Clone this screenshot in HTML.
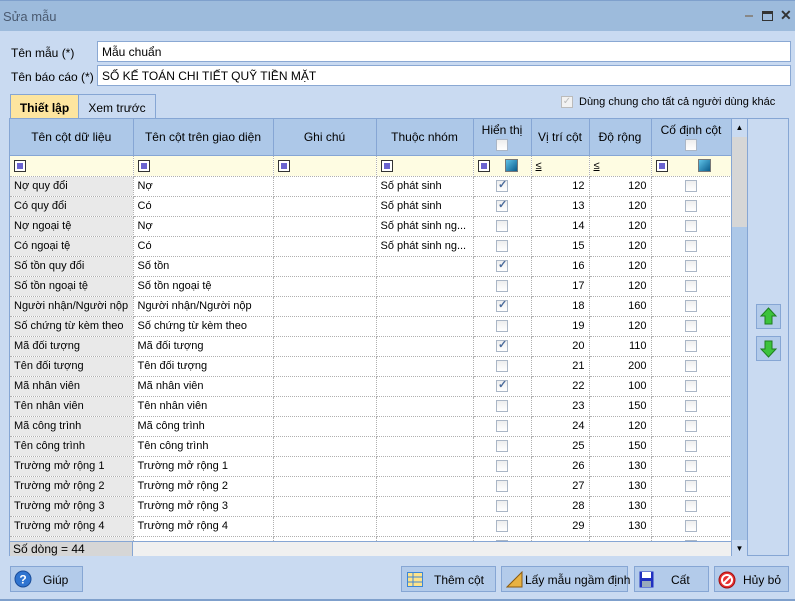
<!DOCTYPE html>
<html><head><meta charset="utf-8"><style>
*{box-sizing:border-box;margin:0;padding:0}
body{width:795px;height:601px;overflow:hidden;background:#c9daf1;font-family:"Liberation Sans",sans-serif;font-size:11px;color:#000;position:relative}
.a{position:absolute}
.title{left:0;top:0;width:795px;height:31px;background:#9dbbdc;border-top:1px solid #7fa0cc}
.inp{background:#fff;border:1px solid #8aa8d3;height:21px;padding:3px 4px;font-size:12px}
.grid{left:10px;top:119px;width:721px;height:422px;overflow:hidden;background:#fff}
table{border-collapse:collapse;table-layout:fixed;width:721px}
td{height:20px;border-right:1px dotted #b0b0b0;border-bottom:1px dotted #b0b0b0;padding:0 4px;white-space:nowrap;overflow:hidden}
td.c0{background:#e9e9e9}
tr.h td{height:36px;background:#adc8e8;border-right:1px solid #86a6d4;border-bottom:1px solid #86a6d4;text-align:center;vertical-align:middle;font-size:12px}
tr.f td{background:#fefce2;height:21px}
.r{text-align:right}.c{text-align:center}
.cb{display:inline-block;width:12px;height:12px;border:1px solid #aab6c6;background:linear-gradient(#eee,#fff);vertical-align:middle;position:relative}
.cb.k::after{content:"✓";position:absolute;left:1px;top:-3px;font-size:11px;color:#4a6a9a;font-weight:bold}
.fb{display:inline-block;width:12px;height:12px;border:1px solid #333;background:#fff;vertical-align:middle;position:relative}
.fb::after{content:"";position:absolute;left:2px;top:2px;width:6px;height:6px;background:#6a63d0}
.fb2{display:inline-block;width:13px;height:13px;border:1px solid #777;background:linear-gradient(135deg,#5fc2e8,#0a5c8c);vertical-align:middle}
.btn{height:26px;top:566px;background:#b3cbea;border:1px solid #86a6d4;font-size:12px;display:flex;align-items:center}
</style></head><body>
<div class="a title"><span class="a" style="left:3px;top:8px;font-size:13px;color:#4a5a70">Sửa mẫu</span>
<div class="a" style="left:745px;top:14px;width:8px;height:2px;background:#888"></div>
<div class="a" style="left:762px;top:10px;width:11px;height:10px;border:1px solid #333;border-top-width:3px"></div>
<span class="a" style="left:780px;top:6px;font-size:14px;font-weight:bold;color:#333">✕</span></div>
<span class="a" style="left:11px;top:46px;font-size:12px">Tên mẫu (*)</span>
<span class="a" style="left:11px;top:70px;font-size:12px">Tên báo cáo (*)</span>
<div class="a inp" style="left:97px;top:41px;width:694px">Mẫu chuẩn</div>
<div class="a inp" style="left:97px;top:65px;width:694px">SỐ KẾ TOÁN CHI TIẾT QUỸ TIỀN MẶT</div>
<div class="a" style="left:10px;top:94px;width:69px;height:26px;background:#fde59f;border:1px solid #86a6d4;border-bottom:none;font-weight:bold;font-size:12px;text-align:center;padding-top:6px">Thiết lập</div>
<div class="a" style="left:78px;top:94px;width:78px;height:25px;background:#c9daf1;border:1px solid #86a6d4;border-bottom:none;text-align:center;padding-top:6px;font-size:12px">Xem trước</div>
<div class="a" style="left:561px;top:96px;width:12px;height:12px;border:1px solid #bbb;background:#f2f2f2;color:#bbb;font-size:10px;line-height:10px;text-align:center">✓</div>
<span class="a" style="left:579px;top:96px">Dùng chung cho tất cả người dùng khác</span>
<div class="a" style="left:9px;top:118px;width:780px;height:438px;border:1px solid #86a6d4"></div>
<div class="a grid"><table>
<colgroup><col style="width:123px"><col style="width:140px"><col style="width:103px"><col style="width:97px"><col style="width:58px"><col style="width:58px"><col style="width:62px"><col style="width:80px"></colgroup>
<tr class="h"><td>Tên cột dữ liệu</td><td>Tên cột trên giao diện</td><td>Ghi chú</td><td>Thuộc nhóm</td><td>Hiển thị<br><span class="cb"></span></td><td>Vị trí cột</td><td>Độ rộng</td><td>Cố định cột<br><span class="cb"></span></td></tr>
<tr class="f"><td class="c0"><span class="fb"></span></td><td><span class="fb"></span></td><td><span class="fb"></span></td><td><span class="fb"></span></td><td><span class="fb"></span>&nbsp;&nbsp;&nbsp;&nbsp;&nbsp;<span class="fb2"></span></td><td><u>≤</u></td><td><u>≤</u></td><td><span class="fb"></span>&nbsp;&nbsp;&nbsp;&nbsp;&nbsp;&nbsp;&nbsp;&nbsp;&nbsp;&nbsp;<span class="fb2"></span></td></tr>
<tr><td class="c0">Nợ quy đổi</td><td>Nợ</td><td></td><td>Số phát sinh</td><td class="c"><span class="cb k"></span></td><td class="r">12</td><td class="r">120</td><td class="c"><span class="cb"></span></td></tr>
<tr><td class="c0">Có quy đổi</td><td>Có</td><td></td><td>Số phát sinh</td><td class="c"><span class="cb k"></span></td><td class="r">13</td><td class="r">120</td><td class="c"><span class="cb"></span></td></tr>
<tr><td class="c0">Nợ ngoại tệ</td><td>Nợ</td><td></td><td>Số phát sinh ng...</td><td class="c"><span class="cb"></span></td><td class="r">14</td><td class="r">120</td><td class="c"><span class="cb"></span></td></tr>
<tr><td class="c0">Có ngoại tệ</td><td>Có</td><td></td><td>Số phát sinh ng...</td><td class="c"><span class="cb"></span></td><td class="r">15</td><td class="r">120</td><td class="c"><span class="cb"></span></td></tr>
<tr><td class="c0">Số tồn quy đổi</td><td>Số tồn</td><td></td><td></td><td class="c"><span class="cb k"></span></td><td class="r">16</td><td class="r">120</td><td class="c"><span class="cb"></span></td></tr>
<tr><td class="c0">Số tồn ngoại tệ</td><td>Số tồn ngoại tệ</td><td></td><td></td><td class="c"><span class="cb"></span></td><td class="r">17</td><td class="r">120</td><td class="c"><span class="cb"></span></td></tr>
<tr><td class="c0">Người nhận/Người nộp</td><td>Người nhận/Người nộp</td><td></td><td></td><td class="c"><span class="cb k"></span></td><td class="r">18</td><td class="r">160</td><td class="c"><span class="cb"></span></td></tr>
<tr><td class="c0">Số chứng từ kèm theo</td><td>Số chứng từ kèm theo</td><td></td><td></td><td class="c"><span class="cb"></span></td><td class="r">19</td><td class="r">120</td><td class="c"><span class="cb"></span></td></tr>
<tr><td class="c0">Mã đối tượng</td><td>Mã đối tượng</td><td></td><td></td><td class="c"><span class="cb k"></span></td><td class="r">20</td><td class="r">110</td><td class="c"><span class="cb"></span></td></tr>
<tr><td class="c0">Tên đối tượng</td><td>Tên đối tượng</td><td></td><td></td><td class="c"><span class="cb"></span></td><td class="r">21</td><td class="r">200</td><td class="c"><span class="cb"></span></td></tr>
<tr><td class="c0">Mã nhân viên</td><td>Mã nhân viên</td><td></td><td></td><td class="c"><span class="cb k"></span></td><td class="r">22</td><td class="r">100</td><td class="c"><span class="cb"></span></td></tr>
<tr><td class="c0">Tên nhân viên</td><td>Tên nhân viên</td><td></td><td></td><td class="c"><span class="cb"></span></td><td class="r">23</td><td class="r">150</td><td class="c"><span class="cb"></span></td></tr>
<tr><td class="c0">Mã công trình</td><td>Mã công trình</td><td></td><td></td><td class="c"><span class="cb"></span></td><td class="r">24</td><td class="r">120</td><td class="c"><span class="cb"></span></td></tr>
<tr><td class="c0">Tên công trình</td><td>Tên công trình</td><td></td><td></td><td class="c"><span class="cb"></span></td><td class="r">25</td><td class="r">150</td><td class="c"><span class="cb"></span></td></tr>
<tr><td class="c0">Trường mở rộng 1</td><td>Trường mở rộng 1</td><td></td><td></td><td class="c"><span class="cb"></span></td><td class="r">26</td><td class="r">130</td><td class="c"><span class="cb"></span></td></tr>
<tr><td class="c0">Trường mở rộng 2</td><td>Trường mở rộng 2</td><td></td><td></td><td class="c"><span class="cb"></span></td><td class="r">27</td><td class="r">130</td><td class="c"><span class="cb"></span></td></tr>
<tr><td class="c0">Trường mở rộng 3</td><td>Trường mở rộng 3</td><td></td><td></td><td class="c"><span class="cb"></span></td><td class="r">28</td><td class="r">130</td><td class="c"><span class="cb"></span></td></tr>
<tr><td class="c0">Trường mở rộng 4</td><td>Trường mở rộng 4</td><td></td><td></td><td class="c"><span class="cb"></span></td><td class="r">29</td><td class="r">130</td><td class="c"><span class="cb"></span></td></tr>
<tr><td class="c0"></td><td></td><td></td><td></td><td class="c"><span class="cb"></span></td><td></td><td></td><td class="c"><span class="cb"></span></td></tr>
</table></div>
<div class="a" style="left:10px;top:541px;width:721px;height:15px;background:#f0f0f0;border-top:1px solid #86a6d4"><div class="a" style="left:0;top:0;width:123px;height:14px;background:#d6d6d6;border-right:1px solid #86a6d4;padding-left:3px;line-height:14px;font-size:12px">Số dòng = 44</div></div>
<div class="a" style="left:731px;top:119px;width:16px;height:437px;background:#adc8e8;border-left:1px solid #86a6d4">
<div class="a" style="left:0;top:0;width:15px;height:18px;background:#c9daf1;font-size:8px;text-align:center;padding-top:4px">▲</div>
<div class="a" style="left:0;top:18px;width:15px;height:90px;background:#d6d6d6"></div>
<div class="a" style="left:0;top:421px;width:15px;height:16px;background:#c9daf1;font-size:8px;text-align:center;padding-top:4px">▼</div></div>
<div class="a" style="left:747px;top:119px;width:1px;height:437px;background:#86a6d4"></div>
<div class="a" style="left:756px;top:304px;width:25px;height:25px;background:#b3cbea;border:1px solid #86a6d4"><svg width="23" height="23" viewBox="0 0 23 23"><path d="M11.5 3 L19 11 H15 V19 H8 V11 H4 Z" fill="#3cc33c" stroke="#1e7d1e"/></svg></div>
<div class="a" style="left:756px;top:336px;width:25px;height:25px;background:#b3cbea;border:1px solid #86a6d4"><svg width="23" height="23" viewBox="0 0 23 23"><path d="M11.5 20 L19 12 H15 V4 H8 V12 H4 Z" fill="#3cc33c" stroke="#1e7d1e"/></svg></div>
<div class="a btn" style="left:10px;width:73px"><svg class="a" style="left:3px;top:3px" width="18" height="18"><circle cx="9" cy="9" r="8" fill="#2f74d0" stroke="#1a4c99"/><text x="9" y="13.5" font-size="12" font-weight="bold" fill="#fff" text-anchor="middle" font-family="Liberation Sans">?</text></svg><span class="a" style="left:32px;top:6px">Giúp</span></div>
<div class="a btn" style="left:401px;width:95px"><svg class="a" style="left:5px;top:5px" width="16" height="15"><rect x="0.5" y="0.5" width="15" height="14" fill="#fde38a" stroke="#3d86d6"/><path d="M1 5H15M1 10H15M6 1V14" stroke="#3d86d6"/></svg><span class="a" style="left:32px;top:6px">Thêm cột</span></div>
<div class="a btn" style="left:501px;width:127px"><svg class="a" style="left:4px;top:4px" width="18" height="17"><path d="M1 16 L16 1 V16 Z" fill="#e8b243" stroke="#8a5a10"/></svg><span class="a" style="left:23px;top:6px;white-space:nowrap">Lấy mẫu ngầm định</span></div>
<div class="a btn" style="left:634px;width:75px"><svg class="a" style="left:4px;top:4px" width="15" height="17"><rect x="0.5" y="0.5" width="14" height="16" fill="#2030c0"/><rect x="3" y="1" width="9" height="6" fill="#fff"/><rect x="3" y="10" width="9" height="6" fill="#9ab"/></svg><span class="a" style="left:36px;top:6px">Cất</span></div>
<div class="a btn" style="left:714px;width:75px"><svg class="a" style="left:3px;top:4px" width="18" height="18"><circle cx="9" cy="9" r="8" fill="#e83030" stroke="#a01010"/><circle cx="9" cy="9" r="5" fill="none" stroke="#fff" stroke-width="2"/><path d="M5.5 12.5 L12.5 5.5" stroke="#fff" stroke-width="2"/></svg><span class="a" style="left:28px;top:6px">Hủy bỏ</span></div>
<div class="a" style="left:0;top:599px;width:795px;height:2px;background:#7fa0cc"></div>
</body></html>
